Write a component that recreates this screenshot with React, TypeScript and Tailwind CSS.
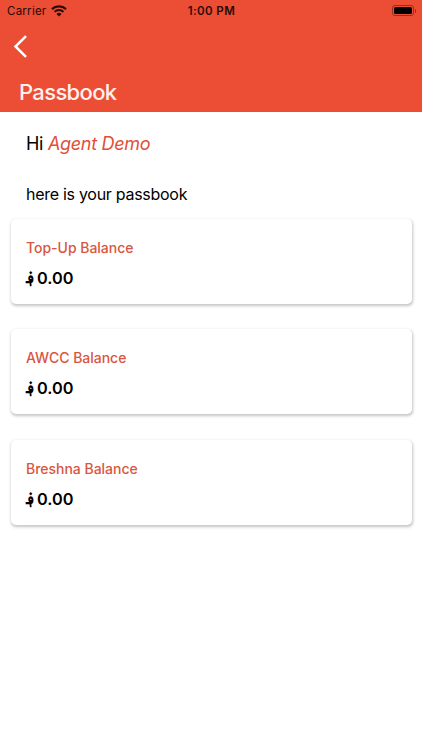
const accounts = [
  { name: "Top-Up Balance", amount: "0.00" },
  { name: "AWCC Balance", amount: "0.00" },
  { name: "Breshna Balance", amount: "0.00" },
];

function WifiIcon() {
  return (
    <svg width="16" height="12" viewBox="0 0 16 12" fill="none" stroke="#280b06">
      <path d="M1 4.2a10.2 10.2 0 0 1 14 0" strokeWidth="2.3" />
      <path d="M3.5 6.9a6.5 6.5 0 0 1 9 0" strokeWidth="2" />
      <path d="M8 11.4 5.5 8.9a3.6 3.6 0 0 1 5 0Z" fill="#280b06" stroke="none" />
    </svg>
  );
}

function StatusBar() {
  return (
    <div className="grid h-[22px] grid-cols-3 items-center pl-[7px] pr-[6px] text-[#280b06]">
      <div className="flex items-center gap-[5px]">
        <span className="text-[11.5px] leading-[22px] tracking-[0.25px]">Carrier</span>
        <WifiIcon />
      </div>
      <span className="text-center text-[11.5px] font-semibold leading-[22px] tracking-[0.4px]">1:00 PM</span>
      <div className="flex items-center justify-end gap-px">
        <div className="-mt-px h-[11px] w-[22px] rounded-[3px] border border-[#962f1f] p-px">
          <div className="h-full w-full rounded-[1.5px] bg-black" />
        </div>
        <div className="-mt-px h-[4px] w-px rounded-r bg-[#962f1f]" />
      </div>
    </div>
  );
}

export default function App() {
  return (
    <div className="flex h-[750px] w-[422px] flex-col bg-white font-['Inter','DejaVu_Sans',sans-serif] text-black">
      <header className="h-[112px] bg-[#eb4e35]">
        <StatusBar />
        <div className="pl-[13px] pt-[13px]">
          <svg width="15" height="23" viewBox="0 0 15 23" fill="none" stroke="white" strokeWidth="2.5">
            <path d="M13 1.2 2.5 11.5 13 21.8" />
          </svg>
        </div>
        <h1 className="pl-[19px] pt-[20px] text-[22px] font-[480] leading-[28px] tracking-[-0.65px] text-[#fff0ed]">
          Passbook
        </h1>
      </header>
      <main>
        <p className="pl-[26px] pt-[19px] text-[18px] leading-[25px] tracking-[-0.3px]">
          Hi <em className="text-[#df5037]">Agent Demo</em>
        </p>
        <p className="pl-[26px] pt-[27px] text-[16px] leading-[22px] tracking-[-0.28px]">here is your passbook</p>
        <div className="flex flex-col gap-[25.3px] pl-[11px] pr-[10.5px] pt-[14px]">
          {accounts.map((a) => (
            <section
              key={a.name}
              className="h-[85px] rounded-[5px] bg-white pl-[15px] pt-[19px] shadow-[0.5px_1.5px_3px_rgba(0,0,0,0.23)]"
            >
              <h2 className="text-[14px] font-medium leading-[20px] tracking-[-0.02px] text-[#d95640]">{a.name}</h2>
              <p className="flex pt-[8px] text-[16.3px] font-semibold leading-[24px]">
                <span className="w-[11px] origin-left scale-x-90 font-['DejaVu_Sans'] text-[16px] font-bold">؋</span>
                <span>{a.amount}</span>
              </p>
            </section>
          ))}
        </div>
      </main>
    </div>
  );
}
